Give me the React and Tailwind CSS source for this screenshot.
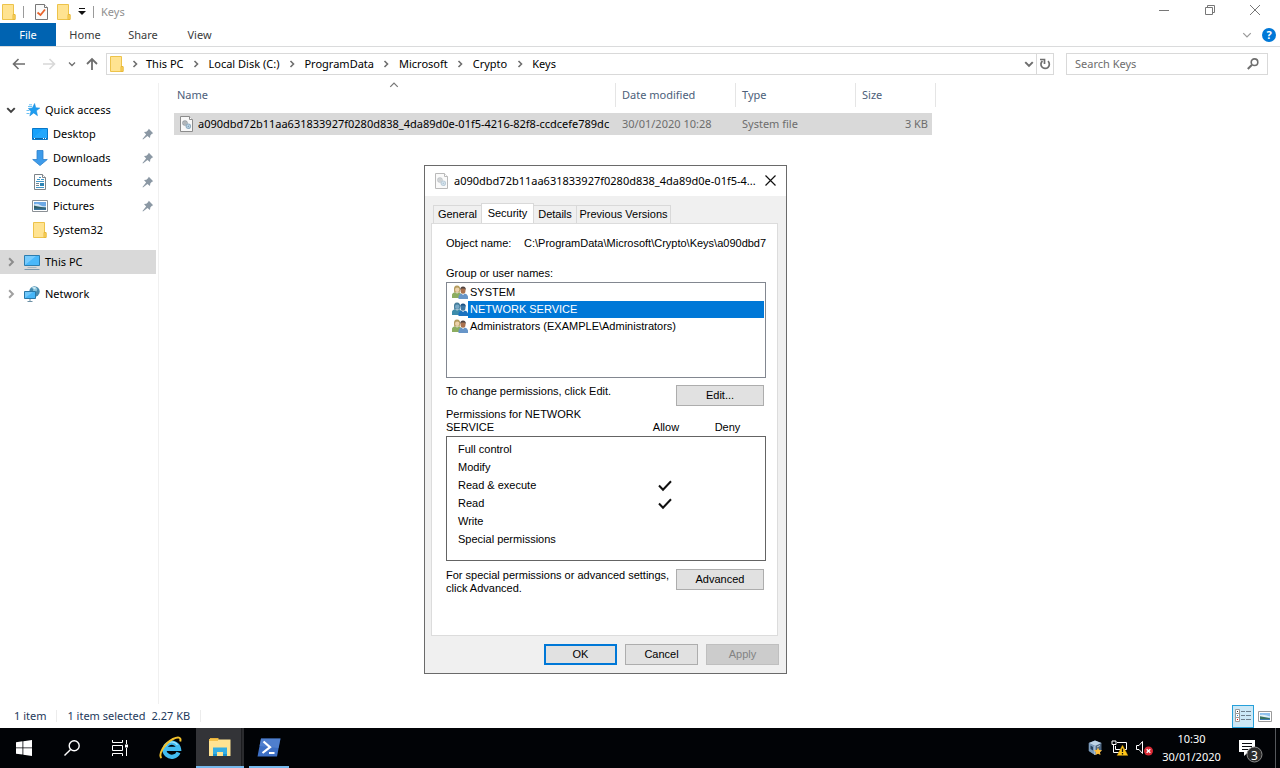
import React from "react";

const FolderIcon = () => (
  <svg width="14" height="16" viewBox="0 0 14 16" aria-hidden="true">
    <path d="M.5.5h11v10.200h1.500v4.800H.5z" fill="#ffe391" stroke="#edc34a" />
    <path d="M11 10.500h2v5h-2z" fill="#ffd866" stroke="#e8b93a" />
  </svg>
);

const Chevron = ({ dir = "right", size = 8, color = "#6e6e6e", w = 1.6 }) => {
  const paths = {
    right: "M2.500 1 5.500 4 2.500 7",
    down: "M1 2.500 4 5.500 7 2.500",
    up: "M1 5.500 4 2.500 7 5.500",
  };
  return (
    <svg width={size} height={size} viewBox="0 0 8 8" fill="none" stroke={color} strokeWidth={w} aria-hidden="true" className="shrink-0">
      <path d={paths[dir]} />
    </svg>
  );
};

const SystemFileIcon = ({ faded = false }) => (
  <svg width="14" height="16" viewBox="0 0 14 16" aria-hidden="true" className={faded ? "shrink-0 opacity-60" : "shrink-0"}>
    <path d="M.5.5h9l3 3v12H.5z" fill="#f8f8f8" stroke="#8c8c8c" />
    <path d="M9.500.5v3h3" fill="#fff" stroke="#8c8c8c" />
    <circle cx="5" cy="7" r="2.200" fill="#cfd4d8" stroke="#9ca2a7" strokeWidth="1.200" />
    <circle cx="8.300" cy="10.200" r="2.200" fill="#c5dced" stroke="#93aec1" strokeWidth="1.200" />
    <circle cx="5" cy="7" r=".8" fill="#868d92" />
    <circle cx="8.300" cy="10.200" r=".8" fill="#7799b0" />
  </svg>
);

const StarIcon = () => (
  <svg width="14" height="14" viewBox="0 0 14 14" aria-hidden="true">
    <path d="M8.600.5 9.800 4.800 13.800 5.100 10.400 7.700 11.500 12.700 7.700 9.900 3.800 12.900 5 8.200 2.300 5.500 6.400 4.900z" fill="#1e9df0" stroke="#1487d8" strokeWidth=".5" />
    <path d="M2 3.500h4M.5 7.500h3M.5 10.500h3M3 1.800h3" stroke="#6bc1f5" />
  </svg>
);

const DesktopIcon = () => (
  <svg width="16" height="12" viewBox="0 0 16 12" aria-hidden="true">
    <path d="M.5.5h15v11H.5z" fill="#16a1fb" stroke="#0877c8" />
    <path d="M1 10.500h14" stroke="#0b66a8" />
    <path d="M2 10.500h1M11 10.500h1M13 10.500h1" stroke="#fff" />
    <path d="M1 10 11 1h4v9z" fill="#35b1ff" opacity=".4" />
  </svg>
);

const DownloadIcon = () => (
  <svg width="16" height="16" viewBox="0 0 16 16" aria-hidden="true">
    <path d="M5 .5h6v9h4.300L8 15.600.7 9.500H5z" fill="#3d9bea" stroke="#2b80cc" strokeWidth=".8" />
  </svg>
);

const DocumentIcon = () => (
  <svg width="14" height="16" viewBox="0 0 14 16" aria-hidden="true">
    <path d="M1.500.5h8l3 3v12h-11z" fill="#fdfdfd" stroke="#7d8388" />
    <path d="M9.500.5v3h3" fill="#fff" stroke="#7d8388" />
    <path d="M6 3.500h2M4 5.500h3M8 5.500h3M3 7.500h8M3 13.500h8" stroke="#3f96c8" />
    <path d="M3 9.500h3M3 11.500h3" stroke="#72858f" />
    <path d="M7 9h4v3H7z" fill="#2f84b4" />
  </svg>
);

const PictureIcon = () => (
  <svg width="16" height="12" viewBox="0 0 16 12" aria-hidden="true" className="shrink-0">
    <path d="M.5.5h15v11H.5z" fill="#fff" stroke="#8b9095" />
    <path d="M2 2h12v8H2z" fill="#6da9e6" />
    <path d="M2 4.500Q5 3 8 5t6 1v1.500H2z" fill="#cfe4f5" />
    <path d="M2 5.500 5 6.200 9 7 14 7.500V10H2z" fill="#2f5f68" />
    <path d="M2 8.500h12V10H2z" fill="#39729c" />
  </svg>
);

const SmallPictureIcon = () => (
  <svg width="14" height="11" viewBox="0 0 14 11" aria-hidden="true" className="shrink-0">
    <path d="M.5.5h13v10H.5z" fill="#fff" stroke="#9a9a9a" />
    <path d="M2 2h10v7H2z" fill="#8fc1ee" />
    <path d="M2 4Q6 3 12 5.500v1H2z" fill="#e3f1f8" />
    <path d="M2 5.200 6 6l6 1.200V9H2z" fill="#38725f" />
    <path d="M2 8h10v1H2z" fill="#3b7bb0" />
  </svg>
);

const PcIcon = () => (
  <svg width="16" height="16" viewBox="0 0 16 16" aria-hidden="true">
    <path d="M.5 1.500h15v10H.5z" fill="#49b8fb" stroke="#2b7db0" />
    <path d="M1 11V2h11z" fill="#8bd3fd" opacity=".7" />
    <path d="M3.500 13.500h9" stroke="#a6b5bf" />
    <path d="M.5 15.500h15" stroke="#7b98ad" />
  </svg>
);

const NetworkIcon = () => (
  <svg width="16" height="16" viewBox="0 0 16 16" aria-hidden="true">
    <circle cx="10.500" cy="5.500" r="5.200" fill="#478aad" />
    <path d="M7 2q3 0 2 3l2 1q3-1 2-4l-3-1.500z" fill="#8cc5dd" />
    <path d="M8 1.500q2-1 4 0l-1 2z" fill="#d3edf5" />
    <path d="M.5 5.500h11v7H.5z" fill="#45b5f7" stroke="#2878a8" />
    <path d="M1 12V6h8z" fill="#83cffb" opacity=".7" />
    <path d="M6 13v2.500M3.500 15.500h5" stroke="#6d90a5" />
  </svg>
);

const PinIcon = () => (
  <svg width="12" height="12" viewBox="0 0 12 12" aria-hidden="true">
    <path d="M6.800.8 11.200 5.200 9.900 5.800 8.300 7.600 8 10 5.400 7.900 1 11.500.5 11 4.100 6.600 2 4 4.400 3.700 6.200 2.100z" fill="#8b98a4" />
  </svg>
);

const UsersIcon = ({ selected = false }) => (
  <svg width="16" height="15" viewBox="0 0 16 15" aria-hidden="true" className="shrink-0">
    <path d="M0 13V9.500Q.5 7.500 3 7.200L5 8.500 7.500 7.200l2 2V13z" fill={selected ? "#3d8cab" : "#8cad60"} />
    <path d="M2 5q-.5-4.500 3-4.500T8.200 5L7.500 7.500H2.200z" fill={selected ? "#467e9c" : "#b39b5e"} />
    <circle cx="5.200" cy="4.800" r="2.200" fill={selected ? "#79a9c6" : "#ecd2ab"} />
    <path d="M6.500 14v-2.500Q7 9 9.500 8.500L11 10l1.800-1.500Q15.500 9 16 11.500V14z" fill={selected ? "#1c73c0" : "#6795c8"} />
    <ellipse cx="11" cy="5.500" rx="2.500" ry="3.200" fill={selected ? "#3f78a4" : "#a9714e"} />
    <path d="M8.300 5Q8 1.500 11 1.500T13.800 5L12.500 3.500 9.500 3.500z" fill={selected ? "#1c5285" : "#4f4340"} />
  </svg>
);

const CheckMark = () => (
  <svg width="14" height="12" viewBox="0 0 14 12" fill="none" stroke="#111" strokeWidth="2" role="img" aria-label="Allowed" className="mx-auto block">
    <path d="M1 5.500 5 9.700 13 1.200" />
  </svg>
);

const crumbs = ["This PC", "Local Disk (C:)", "ProgramData", "Microsoft", "Crypto", "Keys"];

const places = [
  { label: "Desktop", icon: <DesktopIcon />, pinned: true },
  { label: "Downloads", icon: <DownloadIcon />, pinned: true },
  { label: "Documents", icon: <DocumentIcon />, pinned: true },
  { label: "Pictures", icon: <PictureIcon />, pinned: true },
  { label: "System32", icon: <FolderIcon />, pinned: false },
];

const groups = ["SYSTEM", "NETWORK SERVICE", "Administrators (EXAMPLE\\Administrators)"];

const permissions = [
  ["Full control", false],
  ["Modify", false],
  ["Read & execute", true],
  ["Read", true],
  ["Write", false],
  ["Special permissions", false],
];

function TitleBar() {
  return (
    <header className="flex h-[23px] items-center">
      <div className="flex items-center pl-0.5 text-[#8f8f8f]">
        <FolderIcon />
        <span className="ml-[7px] h-3 w-px bg-[#9a9a9a]" />
        <button aria-label="Properties" className="ml-[11px]">
          <svg width="13" height="16" viewBox="0 0 13 16" className="block">
            <path d="M.5.5h9l3 3v12H.5z" fill="#fafafa" stroke="#777" />
            <path d="M9.500.5v3h3" fill="#fff" stroke="#777" />
            <path d="M2.500 8.500 5.500 11 10 5.500" fill="none" stroke="#e8622a" strokeWidth="1.800" />
          </svg>
        </button>
        <button aria-label="New folder" className="ml-[9px]"><FolderIcon /></button>
        <button aria-label="Customize Quick Access Toolbar" className="ml-[7px]">
          <svg width="8" height="7" viewBox="0 0 8 7" className="block">
            <path d="M1 .5h6" stroke="#111" />
            <path d="M0 3h8L4 7z" fill="#111" />
          </svg>
        </button>
        <span className="ml-[7px] h-3 w-px bg-[#9a9a9a]" />
        <h1 className="ml-[7px]">Keys</h1>
      </div>
      <div className="ml-auto flex h-full items-center pr-0.5 pb-[3px]">
        <button aria-label="Minimize" className="flex w-[46px] items-center justify-center">
          <svg width="10" height="10" viewBox="0 0 10 10" stroke="#777"><path d="M0 5.500h10" /></svg>
        </button>
        <button aria-label="Restore" className="flex w-[45px] items-center justify-center">
          <svg width="10" height="10" viewBox="0 0 10 10" fill="none" stroke="#777"><path d="M.5 2.500h7v7h-7zM2.500 2.500v-2h7v7h-2" /></svg>
        </button>
        <button aria-label="Close" className="flex w-[46px] items-center justify-center">
          <svg width="10" height="10" viewBox="0 0 10 10" stroke="#777"><path d="M0 0 10 10M10 0 0 10" /></svg>
        </button>
      </div>
    </header>
  );
}

function Ribbon() {
  return (
    <nav className="flex h-6 items-center border-b border-[#dadbdc] text-[#3b3b3b]">
      <button className="h-full w-14 bg-[#0063b1] text-white">File</button>
      <button className="w-[58px]">Home</button>
      <button className="w-[58px]">Share</button>
      <button className="w-[55px]">View</button>
      <div className="ml-auto flex items-center gap-2.5 pr-1">
        <button aria-label="Expand the Ribbon"><Chevron dir="down" size={10} color="#9a9a9a" w={1} /></button>
        <button aria-label="Help" className="size-3.5 rounded-full bg-[#0078d7] text-[11px] leading-[14px] font-bold text-white">?</button>
      </div>
    </nav>
  );
}

function AddressRow() {
  return (
    <div className="flex h-9 items-start pt-1.5 pr-3">
      <div className="flex h-[22px] w-[106px] items-center pl-3">
        <button aria-label="Back">
          <svg width="14" height="12" viewBox="0 0 14 12" fill="none" stroke="#6e6e6e" strokeWidth="1.600" className="block"><path d="M13 6H2M6.500 1 1.500 6l5 5" /></svg>
        </button>
        <button aria-label="Forward" className="ml-4">
          <svg width="14" height="12" viewBox="0 0 14 12" fill="none" stroke="#d8d8d8" strokeWidth="1.600" className="block"><path d="M1 6h11M7.500 1l5 5-5 5" /></svg>
        </button>
        <button aria-label="Recent locations" className="ml-3"><Chevron dir="down" w={1.3} /></button>
        <button aria-label="Up" className="ml-2.5">
          <svg width="12" height="14" viewBox="0 0 12 14" fill="none" stroke="#6e6e6e" strokeWidth="1.800" className="block"><path d="M6 13V2M1 7l5-5 5 5" /></svg>
        </button>
      </div>
      <div className="flex h-[22px] flex-1 items-center border border-[#d9d9d9] pl-[3px]">
        <FolderIcon />
        {crumbs.map((c, i) => (
          <React.Fragment key={c}>
            <span className={i === 0 ? "flex w-[22px] justify-center" : "flex w-[25px] justify-center"}><Chevron /></span>
            <button className="whitespace-nowrap">{c}</button>
          </React.Fragment>
        ))}
        <button aria-label="Previous locations" className="ml-auto pr-0.5"><Chevron dir="down" size={10} w={1.6} /></button>
        <button aria-label="Refresh" className="flex h-full w-[17px] items-center justify-center border-l border-[#d9d9d9]">
          <svg width="12" height="12" viewBox="0 0 12 12" fill="none" stroke="#6e6e6e" strokeWidth="1.700">
            <path d="M9 3.200A4.200 4.200 0 1 1 3.500 3" />
            <path d="M1 1.500h4.500V6" />
          </svg>
        </button>
      </div>
      <label className="ml-3 flex h-[22px] w-[202px] items-center border border-[#d9d9d9] pr-2 pl-2">
        <input type="search" aria-label="Search Keys" placeholder="Search Keys" className="w-full min-w-0 bg-transparent outline-none placeholder:text-[#6d6d6d]" />
        <svg width="12" height="12" viewBox="0 0 12 12" fill="none" stroke="#6e6e6e" strokeWidth="1.600" aria-hidden="true" className="shrink-0">
          <circle cx="7.500" cy="4.200" r="3.300" />
          <path d="M5 6.700.8 11" strokeWidth="2" />
        </svg>
      </label>
    </div>
  );
}

function Sidebar() {
  return (
    <nav aria-label="Folders" className="w-[159px] shrink-0 border-r border-[#f0f0f0] pt-[15px]">
      <a href="#quick-access" className="flex h-6 items-center pl-1.5">
        <Chevron dir="down" size={10} color="#404040" />
        <span className="ml-2.5 flex w-[19px]"><StarIcon /></span>
        Quick access
      </a>
      <ul>
        {places.map((p) => (
          <li key={p.label}>
            <a href={"#" + p.label} className="flex h-6 items-center pr-1 pl-8">
              <span className="mr-[5px] flex w-4 justify-center">{p.icon}</span>
              {p.label}
              {p.pinned && <span className="ml-auto"><PinIcon /></span>}
            </a>
          </li>
        ))}
      </ul>
      <a href="#this-pc" className="mt-2 mr-0.5 flex h-6 items-center bg-[#d9d9d9] pl-1.5">
        <Chevron size={10} color="#8c8c8c" />
        <span className="mr-[5px] ml-2 flex"><PcIcon /></span>
        This PC
      </a>
      <a href="#network" className="mt-2 flex h-6 items-center pl-1.5">
        <Chevron size={10} color="#a0a0a0" />
        <span className="mr-[5px] ml-2 flex"><NetworkIcon /></span>
        Network
      </a>
    </nav>
  );
}

function FileTable() {
  const head = "flex h-6 items-center border-r border-[#e5e5e5] font-normal";
  return (
    <div className="flex-1 pl-[15px]">
      <table className="w-[762px] table-fixed border-collapse text-left">
        <colgroup>
          <col className="w-[442px]" />
          <col className="w-[120px]" />
          <col className="w-[120px]" />
          <col className="w-[76px]" />
          <col className="w-1" />
        </colgroup>
        <thead className="text-[#4c607a]">
          <tr className="h-[30px] align-top">
            <th className="relative p-0">
              <div className={head + " pl-[3px]"}>Name</div>
              <span className="absolute top-[-3px] left-[215px]"><Chevron dir="up" size={10} color="#777" w={1} /></span>
            </th>
            <th className="p-0"><div className={head + " pl-1.5"}>Date modified</div></th>
            <th className="p-0"><div className={head + " pl-1.5"}>Type</div></th>
            <th colSpan="2" className="p-0"><div className={head + " pl-1.5"}>Size</div></th>
          </tr>
        </thead>
        <tbody>
          <tr className="h-[22px] text-[#6d6d6d]">
            <td className="bg-[#d9d9d9] p-0 text-black">
              <div className="flex items-center gap-1 pl-1.5 whitespace-nowrap">
                <SystemFileIcon />
                a090dbd72b11aa631833927f0280d838_4da89d0e-01f5-4216-82f8-ccdcefe789dc
              </div>
            </td>
            <td className="bg-[#d9d9d9] p-0 pl-1.5">30/01/2020 10:28</td>
            <td className="bg-[#d9d9d9] p-0 pl-1.5">System file</td>
            <td className="bg-[#d9d9d9] p-0 pr-1 text-right">3 KB</td>
            <td className="p-0" />
          </tr>
        </tbody>
      </table>
    </div>
  );
}

function StatusBar() {
  return (
    <footer className="flex h-6 items-center text-[#1e395b]">
      <span className="pl-3.5">1 item</span>
      <span className="mx-2.5 h-3 w-px bg-[#ececec]" />
      <span>1 item selected</span>
      <span className="ml-1.5">2.27 KB</span>
      <span className="ml-2.5 h-3 w-px bg-[#ececec]" />
      <div className="ml-auto flex h-full items-center gap-1 pr-2">
        <button aria-label="Details view" aria-pressed="true" className="flex h-[23px] w-[22px] items-center justify-center border border-[#26a0da] bg-[#cce8f6]">
          <svg width="16" height="14" viewBox="0 0 16 14" aria-hidden="true">
            <path d="M.5.5h4v4h-4zM.5 4.500h4v4h-4zM.5 8.500h4v4h-4z" fill="#fff" stroke="#9a9a9a" />
            <path d="M2 2h1v1H2z" fill="#333" /><path d="M2 6h1v1H2z" fill="#1b87d8" /><path d="M2 10h1v1H2z" fill="#e00" />
            <path d="M6 2.500h4M11 2.500h5M6 6.500h4M11 6.500h5M6 10.500h4M11 10.500h5" stroke="#6e7f8c" />
          </svg>
        </button>
        <button aria-label="Large thumbnails"><SmallPictureIcon /></button>
      </div>
    </footer>
  );
}

function PropertiesDialog() {
  const btn = "h-[21px] border border-[#adadad] bg-[#e1e1e1]";
  const tab = "h-[18px] border border-b-0 border-[#d9d9d9] bg-[#f0f0f0] whitespace-nowrap";
  return (
    <section
      role="dialog"
      aria-labelledby="dialog-title"
      className="absolute top-[165px] left-[424px] w-[363px] border border-[#6a6a6a] bg-[#f0f0f0] pb-2 font-['Liberation_Sans',Arial,sans-serif] text-[11px] leading-[13px] text-black"
    >
      <div className="flex h-[30px] items-center bg-white pr-2.5 pb-px pl-2.5 font-['Noto_Sans','Open_Sans',sans-serif]">
        <SystemFileIcon faded />
        <h2 id="dialog-title" className="ml-[5px] whitespace-nowrap">a090dbd72b11aa631833927f0280d838_4da89d0e-01f5-4...</h2>
        <button aria-label="Close" className="ml-auto">
          <svg width="11" height="11" viewBox="0 0 11 11" stroke="#111" strokeWidth="1.200" className="block"><path d="M.5.5l10 10M10.500.5l-10 10" /></svg>
        </button>
      </div>
      <div role="tablist" className="flex items-end pt-[7px] pl-2">
        <button role="tab" aria-selected="false" className={tab + " w-12 border-r-0"}>General</button>
        <button role="tab" aria-selected="true" className="h-5 w-[53px] border border-b-0 border-[#d9d9d9] bg-white">Security</button>
        <button role="tab" aria-selected="false" className={tab + " w-[42px] border-x-0"}>Details</button>
        <button role="tab" aria-selected="false" className={tab + " w-[95px]"}>Previous Versions</button>
      </div>
      <div role="tabpanel" className="mr-2 ml-1.5 h-[413px] border border-[#dcdcdc] bg-white pt-[13px] pr-[11px] pl-3.5">
        <div className="flex items-center">
          <span className="w-[78px] shrink-0">Object name:</span>
          <span className="whitespace-nowrap">C:\ProgramData\Microsoft\Crypto\Keys\a090dbd7</span>
        </div>
        <p id="groups-label" className="mt-[17px]">Group or user names:</p>
        <ul role="listbox" aria-labelledby="groups-label" className="mt-0.5 h-24 border border-[#828790] py-px pr-px pl-1">
          {groups.map((g, i) => (
            <li key={g} role="option" aria-selected={i === 1} className="flex h-[17px] items-center pl-px">
              <UsersIcon selected={i === 1} />
              <span className={i === 1 ? "h-full flex-1 bg-[#0078d7] pl-0.5 leading-[17px] text-white" : "flex-1 pl-0.5"}>{g}</span>
            </li>
          ))}
        </ul>
        <div className="mt-[7px] flex items-start justify-between pr-0.5">
          <p>To change permissions, click Edit.</p>
          <button className={btn + " w-[88px]"}>Edit...</button>
        </div>
        <table className="mt-0.5 w-full table-fixed border-separate border-spacing-0 text-left">
          <colgroup>
            <col className="w-[189px]" />
            <col className="w-[62px]" />
            <col />
          </colgroup>
          <thead>
            <tr className="align-bottom">
              <th className="p-0 pr-10 pb-0.5 font-normal">Permissions for NETWORK SERVICE</th>
              <th className="p-0 pb-0.5 text-center font-normal">Allow</th>
              <th className="p-0 pr-2 pb-0.5 text-center font-normal">Deny</th>
            </tr>
          </thead>
          <tbody className="outline outline-1 -outline-offset-1 outline-[#646464]">
            <tr aria-hidden="true" className="h-1"><td colSpan="3" className="p-0" /></tr>
            {permissions.map(([name, allowed]) => (
              <tr key={name} className="h-[18px]">
                <td className="p-0 pl-3">{name}</td>
                <td className="p-0 pt-0.5 pr-0.5">{allowed && <CheckMark />}</td>
                <td className="p-0" />
              </tr>
            ))}
            <tr aria-hidden="true" className="h-[13px]"><td colSpan="3" className="p-0" /></tr>
          </tbody>
        </table>
        <div className="mt-2 flex items-start justify-between pr-0.5">
          <p className="whitespace-nowrap">For special permissions or advanced settings,<br />click Advanced.</p>
          <button className={btn + " w-[88px] shrink-0"}>Advanced</button>
        </div>
      </div>
      <div className="flex justify-end gap-2 pt-2 pr-[7px]">
        <button className="h-[21px] w-[73px] border-2 border-[#0078d7] bg-[#e1e1e1]">OK</button>
        <button className={btn + " w-[73px]"}>Cancel</button>
        <button disabled className="h-[21px] w-[73px] border border-[#bfbfbf] bg-[#cccccc] text-[#838383]">Apply</button>
      </div>
    </section>
  );
}

function Taskbar() {
  const item = "flex h-full w-12 items-center justify-center";
  return (
    <div className="flex h-10 items-center bg-[#010306] text-white">
      <button aria-label="Start" className={item}>
        <svg width="16" height="16" viewBox="0 0 16 16" fill="#fff"><path d="M0 2.200 6.500 1.300v6.200H0zM7.300 1.200 16 0v7.500H7.300zM0 8.300h6.500v6.200L0 13.700zM7.300 8.300H16V16L7.300 14.700z" /></svg>
      </button>
      <button aria-label="Search" className={item}>
        <svg width="16" height="16" viewBox="0 0 16 16" fill="none" stroke="#fff" strokeWidth="1.400"><circle cx="10.200" cy="5.700" r="5" /><path d="M6.600 9.400.5 15.500" /></svg>
      </button>
      <button aria-label="Task View" className={item}>
        <svg width="16" height="16" viewBox="0 0 16 16" fill="none" stroke="#fff"><path d="M.5 0v2.500h10V0M.5 5.500h10v5H.5zM.5 16v-2.500h10V16M14.500 0v4M14.500 8v8" /><path d="M13 4.500h3v3h-3z" fill="#fff" stroke="none" /></svg>
      </button>
      <button aria-label="Internet Explorer" className={item + " mr-1 pl-1.5"}>
        <svg width="24" height="24" viewBox="0 0 24 24" fill="none">
          <path d="M19.500 16.500A7.300 7 0 1 1 20 12.800H7" stroke="#43bdf0" strokeWidth="4.200" />
          <path d="M6.500 10.500q1.500-4.500 6.500-4.500 3.500 0 5.500 3" stroke="#a8e8ff" strokeWidth="1.200" />
          <path d="M2.500 22C-1 19 5 7.500 14 3c5-2.500 8.500-2 7.200 2.500" stroke="#f3c22c" strokeWidth="2" />
        </svg>
      </button>
      <button aria-label="File Explorer" className="flex h-full w-12 items-center border-b-2 border-[#76b9ed] bg-[#333438]">
        <svg width="22" height="20" viewBox="0 0 22 20" className="ml-[13px]">
          <path d="M1 2.500V1h8l1.500 1.500" fill="#e8b23a" />
          <path d="M0 2.500h21.500V19H0z" fill="#ffe392" />
          <path d="M0 2h9v2H0z" fill="#f5c24b" />
          <path d="M4 19v-8.500h14V19h-4v-4H8v4z" fill="#35ade2" />
          <path d="M4 17h4v2H4zM14 17h4v2h-4z" fill="#1b92cc" />
        </svg>
        <span className="ml-auto h-full w-[3px] border-l border-[#1b1c1f] bg-[#2a2b2e]" />
      </button>
      <button aria-label="Windows PowerShell" className="ml-[5px] flex h-full w-10 items-center justify-center border-b-2 border-[#76b9ed]">
        <svg width="24" height="19" viewBox="0 0 24 19">
          <path d="M4 .5h19.500L20 18.500H.5z" fill="#3d6fc4" />
          <path d="M4 .5h19.500L21.500 10 2.500 8z" fill="#5b8ad6" opacity=".6" />
          <path d="M6.500 3.500 13 9.200 5.500 15M12 15h5.500" fill="none" stroke="#fff" strokeWidth="2.200" />
        </svg>
      </button>
      <div className="ml-auto flex h-full items-center">
        <svg width="15" height="16" viewBox="0 0 15 16" role="img" aria-label="VirtualBox" className="mr-2">
          <path d="M7 .5 13.500 3v8L7 15 .8 11V3z" fill="#4c6580" />
          <path d="M7 .5 13.500 3 7 6 .8 3z" fill="#bdd3e6" />
          <path d="M.8 3 7 6v9L.8 11z" fill="#7c9cbc" />
          <path d="M2.500 5.500v3.500l2.500 1.500V7z" fill="#26405c" />
          <path d="M7 6v9M9 7l3-1.500" stroke="#d9e7f2" strokeWidth=".8" />
          <path d="M10 7.500 11.200 10l2.800.3-2 2 .5 2.700-2.500-1.300L7.500 15l.5-2.700-2-2 2.800-.3z" fill="#ffbf3b" />
        </svg>
        <svg width="17" height="16" viewBox="0 0 17 16" fill="none" role="img" aria-label="Network: limited access" className="mr-2">
          <path d="M6 2.500h9.500v7H4.500V6M4 12.500h5M2.500 5v7.500h3M1 1h4v3.500H1z" stroke="#fff" />
          <path d="M11.500 5 17 15.500H6z" fill="#ffc61a" stroke="#9c7200" strokeWidth=".4" />
          <path d="M11.500 8.500V12M11.500 13v1.500" stroke="#111" strokeWidth="1.300" />
        </svg>
        <svg width="17" height="16" viewBox="0 0 17 16" fill="none" role="img" aria-label="Volume: unavailable" className="mr-[9px]">
          <path d="M.5 5.500H3l3.500-4v12l-3.500-4H.5z" stroke="#fff" />
          <circle cx="12.500" cy="11" r="4.500" fill="#d92a35" />
          <path d="M10.700 9.200l3.600 3.600M14.300 9.200l-3.600 3.600" stroke="#fff" strokeWidth="1.300" />
        </svg>
        <div className="w-[59px] text-center leading-[18px]">
          <div>10:30</div>
          <div>30/01/2020</div>
        </div>
        <button aria-label="Notifications: 3 new" className="relative mr-3 ml-[18px] h-full w-6">
          <svg width="24" height="26" viewBox="0 0 24 26" className="mt-2">
            <path d="M0 1h16v12H9.500L5 17v-4H0z" fill="#fff" />
            <path d="M3 4.500h10M3 7.500h10M3 10.500h6" stroke="#0a0c10" />
            <circle cx="15.500" cy="15.500" r="7.500" fill="#2b2b2b" stroke="#8a8a8a" />
          </svg>
          <span className="absolute top-5 left-3 text-xs leading-4">3</span>
        </button>
        <span className="mr-1 h-full w-px bg-[#55585c]" />
      </div>
    </div>
  );
}

export default function App() {
  return (
    <div className="relative flex min-h-screen flex-col bg-white font-['Noto_Sans','Open_Sans',sans-serif] text-[11px] leading-4 text-black">
      <TitleBar />
      <Ribbon />
      <AddressRow />
      <main className="flex flex-1">
        <Sidebar />
        <FileTable />
      </main>
      <StatusBar />
      <Taskbar />
      <PropertiesDialog />
    </div>
  );
}
